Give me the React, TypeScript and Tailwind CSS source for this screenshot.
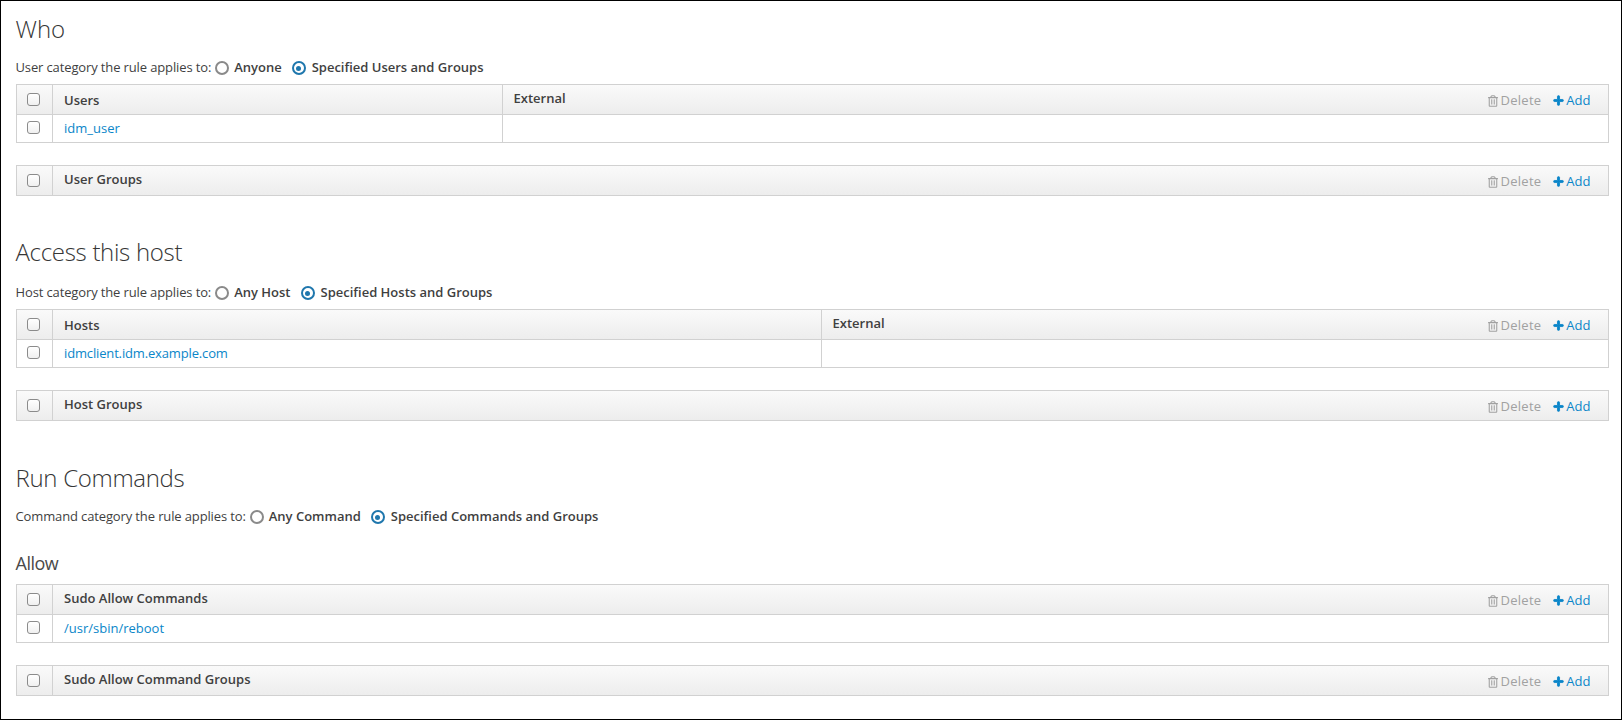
import React from "react";
import { FaPlus, FaRegTrashAlt } from "react-icons/fa";

function Check() {
  return <span className="block w-[13px] h-[13px] rounded-[3px] border border-[#8b8b8b] bg-gradient-to-b from-white to-[#f0f0f0]" />;
}

function Radio({ on, label, mr }: { on?: boolean; label: string; mr: string }) {
  return (
    <span className={`inline-flex items-center font-semibold ${mr}`}>
      <span className={`flex items-center justify-center w-[14px] h-[14px] rounded-full bg-white border-2 ${on ? "border-[#1f77ad] mr-[6px]" : "border-[#8a8a8a] mr-[5px]"}`}>
        {on && <span className="block w-[5px] h-[5px] rounded-full bg-[#1f77ad]" />}
      </span>
      {label}
    </span>
  );
}

function RadioRow({ text, a, b, className }: { text: string; a: string; b: string; className: string }) {
  return (
    <div className={`flex items-center h-[18px] text-[13px] text-[#3f3f3f] whitespace-nowrap ${className}`}>
      <span className="mr-[4px] tracking-[-0.13px]">{text}</span>
      <Radio label={a} mr="mr-[10px]" />
      <Radio on label={b} mr="" />
    </div>
  );
}

function Table({ title, external, rowLink, tight, className }: { title: string; external?: string; rowLink?: string; tight?: boolean; className: string }) {
  return (
    <div className={`border border-[#d1d1d1] text-[13px] ${className}`}>
      <div className="flex h-[29px] bg-gradient-to-b from-[#fafafa] to-[#ededed] text-[#404040] font-semibold">
        <div className="w-[36px] shrink-0 flex items-center justify-center border-r border-[#d1d1d1] pr-[2px]"><Check /></div>
        <div className={`flex items-center pl-[11.5px] ${external ? external + " pt-[2px] border-r border-[#d1d1d1]" : "pb-[2px]"}`}>{title}</div>
        {external && <div className="pl-[11px] pt-[4px]">External</div>}
        <div className="ml-auto flex items-center pr-[17px] pt-[2px] font-normal">
          <span className="flex items-center text-[#a1a1a1] tracking-[0.25px]"><FaRegTrashAlt className="w-[10px] h-[12px] mr-[3px]" />Delete</span>
          <span className="flex items-center text-[#0a86c9] ml-[12px]"><FaPlus className="w-[11px] h-[11px] mr-[2px]" stroke="currentColor" strokeWidth={40} />Add</span>
        </div>
      </div>
      {rowLink && (
        <div className="flex h-[28px] border-t border-[#d1d1d1] bg-white">
          <div className="w-[36px] shrink-0 flex items-center justify-center border-r border-[#d1d1d1] pb-[2px] pr-[2px]"><Check /></div>
          <div className={`flex items-center pl-[11.5px] text-[#0a86c9] ${tight ? "tracking-[-0.15px]" : ""} ${external ? external + " border-r border-[#d1d1d1]" : ""}`}>{rowLink}</div>
        </div>
      )}
    </div>
  );
}

export default function App() {
  return (
    <div className="w-[1622px] h-[720px] box-border border border-black bg-white pl-[14.5px] pr-[12.5px] text-[#363636] overflow-hidden" style={{ fontFamily: '"Open Sans", sans-serif' }}>
      <h2 className="text-[24px] leading-[28px] font-light mt-[14px]">Who</h2>
      <RadioRow className="mt-[16px]" text="User category the rule applies to:" a="Anyone" b="Specified Users and Groups" />
      <Table className="mt-[7px]" title="Users" external="w-[450px]" rowLink="idm_user" />
      <Table className="mt-[22px]" title="User Groups" />
      <h2 className="text-[24px] leading-[28px] font-light tracking-[-0.3px] mt-[42px]">Access this host</h2>
      <RadioRow className="mt-[18px]" text="Host category the rule applies to:" a="Any Host" b="Specified Hosts and Groups" />
      <Table className="mt-[7px]" title="Hosts" external="w-[769px]" rowLink="idmclient.idm.example.com" tight />
      <Table className="mt-[22px]" title="Host Groups" />
      <h2 className="text-[24px] leading-[28px] font-light tracking-[-0.3px] mt-[43px]">Run Commands</h2>
      <RadioRow className="mt-[16px]" text="Command category the rule applies to:" a="Any Command" b="Specified Commands and Groups" />
      <h3 className="text-[18px] leading-[20px] font-normal text-[#4a4a4a] tracking-[-0.5px] mt-[27px]">Allow</h3>
      <Table className="mt-[11px]" title="Sudo Allow Commands" rowLink="/usr/sbin/reboot" />
      <Table className="mt-[22px]" title="Sudo Allow Command Groups" />
    </div>
  );
}
